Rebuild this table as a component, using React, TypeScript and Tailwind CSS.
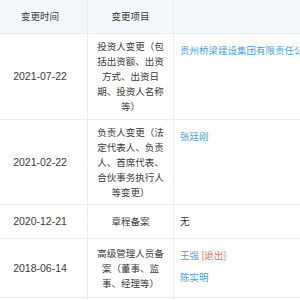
import React from 'react'

type Row = {
  date: string
  item: string[]
  height: string
  content: React.ReactNode
}

const rows: Row[] = [
  {
    date: '2021-07-22',
    item: ['投资人变更（包', '括出资额、出资', '方式、出资日', '期、投资人名称', '等）'],
    height: 'h-[86px]',
    content: <span className="text-[#4a9fe3]">贵州桥梁建设集团有限责任公司</span>,
  },
  {
    date: '2021-02-22',
    item: ['负责人变更（法', '定代表人、负责', '人、首席代表、', '合伙事务执行人', '等变更）'],
    height: 'h-[85px]',
    content: <span className="text-[#4a9fe3]">张廷刚</span>,
  },
  {
    date: '2020-12-21',
    item: ['章程备案'],
    height: 'h-[34px]',
    content: <span className="text-[#333]">无</span>,
  },
  {
    date: '2018-06-14',
    item: ['高级管理人员备', '案（董事、监', '事、经理等）'],
    height: 'h-[59px]',
    content: (
      <div className="flex flex-col gap-[7px]">
        <div>
          <span className="text-[#4a9fe3]">王强</span>{' '}
          <span className="text-[#e2725a]">[退出]</span>
        </div>
        <span className="text-[#4a9fe3]">陈实明</span>
      </div>
    ),
  },
]

export default function App() {
  return (
    <div
      className="w-[300px] h-[300px] overflow-hidden bg-white text-[9.5px] leading-[15px] text-[#3a3a3a]"
      style={{ fontFamily: '"Noto Sans CJK SC", "Liberation Sans", sans-serif' }}
    >
      <div className="w-[300px]">
        <div className="flex h-[34px] bg-[#f3f7fc] border-b border-[#e6edf5]">
          <div className="w-[88px] shrink-0 flex items-center justify-center pr-[7px] border-r border-[#e6edf5]">
            变更时间
          </div>
          <div className="w-[86px] shrink-0 flex items-center justify-center border-r border-[#e6edf5]">
            变更项目
          </div>
          <div className="flex-1" />
        </div>

        {rows.map((row) => (
          <div key={row.date} className={`flex border-b border-[#e6edf5] ${row.height}`}>
            <div
              className="w-[88px] shrink-0 flex items-center justify-center pr-[7px] border-r border-[#e6edf5] text-[10.5px]"
              style={{ fontFamily: '"Liberation Sans", sans-serif' }}
            >
              {row.date}
            </div>
            <div className="w-[86px] shrink-0 flex flex-col items-center justify-center border-r border-[#e6edf5]">
              {row.item.map((line) => (
                <span key={line} className="whitespace-nowrap">
                  {line}
                </span>
              ))}
            </div>
            <div className="flex-1 min-w-0 pl-[6px] pt-[9px] whitespace-nowrap overflow-hidden">{row.content}</div>
          </div>
        ))}
        <div className="flex h-[10px]">
          <div className="w-[88px] shrink-0 border-r border-[#e6edf5]" />
          <div className="w-[86px] shrink-0 border-r border-[#e6edf5]" />
        </div>
      </div>
    </div>
  )
}
